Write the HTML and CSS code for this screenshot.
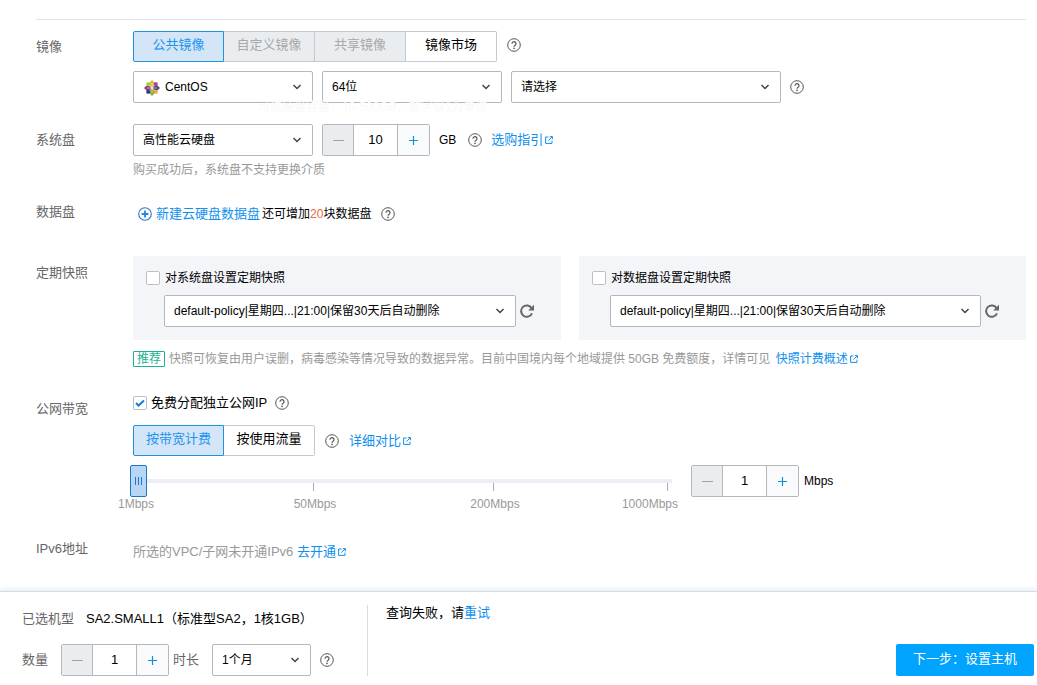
FILE: index.html
```html
<!DOCTYPE html>
<html lang="zh-CN">
<head>
<meta charset="utf-8">
<meta name="viewport" content="width=device-width, initial-scale=1">
<title>选择机型</title>
<link rel="stylesheet" href="styles.css">
</head>
<body>
<svg class="sprite" aria-hidden="true">
  <symbol id="help" viewBox="0 0 14 14"><circle cx="7" cy="7" r="6.3" fill="none" stroke="currentColor" stroke-width="1"/><path d="M5 5.7a2 2 0 1 1 3.1 1.6c-.8.5-1.1.8-1.1 1.5" fill="none" stroke="currentColor" stroke-width="1.2"/><circle cx="7" cy="10.4" r=".8" fill="currentColor"/></symbol>
  <symbol id="chevron" viewBox="0 0 10 6"><path d="M1.5 1L5 4.5 8.5 1" fill="none" stroke="currentColor" stroke-width="1.5"/></symbol>
  <symbol id="external" viewBox="0 0 8 8"><path d="M3.5 1H.6v6.4H7V4.6M4.8.6h2.6v2.6M7.2.8L3.4 4.6" fill="none" stroke="currentColor" stroke-width="1"/></symbol>
  <symbol id="refresh" viewBox="0 0 14 14"><path d="M12 9.4a5.7 5.7 0 1 1-.3-5.2" fill="none" stroke="currentColor" stroke-width="2"/><path d="M14 .8v5.8H8.2z" fill="currentColor"/></symbol>
  <symbol id="minus" viewBox="0 0 11 11"><path d="M0 5.5h11" stroke="currentColor"/></symbol>
  <symbol id="plus" viewBox="0 0 11 11"><path d="M1 5.5h9M5.5 1v9" stroke="currentColor" stroke-width="1.2"/></symbol>
</svg>

<main class="config">
  <section class="row">
    <div class="row-label">镜像</div>
    <div class="row-body">
      <div class="line tabs-line">
        <div class="tabs">
          <button class="tab active" type="button">公共镜像</button>
          <button class="tab" type="button" disabled>自定义镜像</button>
          <button class="tab" type="button" disabled>共享镜像</button>
          <button class="tab" type="button">镜像市场</button>
        </div>
        <svg class="help"><use href="#help"/></svg>
      </div>
      <div class="line selects">
        <div class="select wide with-logo">
          <svg class="os-logo" viewBox="0 0 16 16">
            <path d="M2.4 2.4h5.2v5.2H2.4z" fill="#a3cf3c"/><path d="M8.4 2.4h5.2v5.2H8.4z" fill="#a0408f"/>
            <path d="M2.4 8.4h5.2v5.2H2.4z" fill="#2b3775"/><path d="M8.4 8.4h5.2v5.2H8.4z" fill="#f0a52e"/>
            <path d="M8 0l2 2v3.4L8 7.4l-2-2V2z" fill="#e8b53c"/><path d="M16 8l-2 2h-3.4l-2-2 2-2H14z" fill="#5b4689"/>
            <path d="M8 16l-2-2v-3.4l2-2 2 2V14z" fill="#86ad45"/><path d="M0 8l2-2h3.4l2 2-2 2H2z" fill="#993f85"/>
            <path d="M8 3v10M3 8h10" stroke="#fff" stroke-width=".5"/><path d="M5 5l6 6M11 5l-6 6" stroke="#fff" stroke-width=".5"/>
          </svg>
          <select aria-label="操作系统"><option>CentOS</option></select>
          <svg class="chevron"><use href="#chevron"/></svg>
        </div>
        <div class="select wide">
          <select aria-label="系统位数"><option>64位</option></select>
          <svg class="chevron"><use href="#chevron"/></svg>
        </div>
        <div class="select widest">
          <select aria-label="镜像版本"><option>请选择</option></select>
          <svg class="chevron"><use href="#chevron"/></svg>
        </div>
        <svg class="help"><use href="#help"/></svg>
      </div>
    </div>
  </section>

  <section class="row disk">
    <div class="row-label">系统盘</div>
    <div class="row-body">
      <div class="fading-tip">可选硬盘容量：10-500GB，数字以1为单位</div>
      <div class="line selects">
        <div class="select wide">
          <select aria-label="系统盘类型"><option>高性能云硬盘</option></select>
          <svg class="chevron"><use href="#chevron"/></svg>
        </div>
        <div class="stepper">
          <button type="button" aria-label="减少" disabled><svg><use href="#minus"/></svg></button>
          <input type="text" value="10" aria-label="系统盘容量">
          <button type="button" aria-label="增加"><svg><use href="#plus"/></svg></button>
        </div>
        <span class="unit">GB</span>
        <svg class="help disk-help"><use href="#help"/></svg>
        <a class="link" href="#guide">选购指引<svg class="ext"><use href="#external"/></svg></a>
      </div>
      <p class="hint">购买成功后，系统盘不支持更换介质</p>
    </div>
  </section>

  <section class="row data">
    <div class="row-label">数据盘</div>
    <div class="row-body line data-line">
      <a class="link add" href="#add-disk"><svg class="add-icon" viewBox="0 0 14 14"><circle cx="7" cy="7" r="6.3" fill="none" stroke="#3672c9" stroke-width="1.1"/><path d="M7 3.6v6.8M3.6 7h6.8" stroke="#2588dc" stroke-width="1.8"/></svg>新建云硬盘数据盘</a>
      <span class="remain">还可增加<b>20</b>块数据盘</span>
      <svg class="help"><use href="#help"/></svg>
    </div>
  </section>

  <section class="row snapshot">
    <div class="row-label">定期快照</div>
    <div class="row-body">
      <div class="panels">
        <div class="panel">
          <label class="check small"><input type="checkbox"><span>对系统盘设置定期快照</span></label>
          <div class="line policy">
            <div class="select">
              <select aria-label="系统盘快照策略"><option>default-policy|星期四...|21:00|保留30天后自动删除</option></select>
              <svg class="chevron"><use href="#chevron"/></svg>
            </div>
            <button class="refresh" type="button" aria-label="刷新"><svg><use href="#refresh"/></svg></button>
          </div>
        </div>
        <div class="panel">
          <label class="check small"><input type="checkbox"><span>对数据盘设置定期快照</span></label>
          <div class="line policy">
            <div class="select">
              <select aria-label="数据盘快照策略"><option>default-policy|星期四...|21:00|保留30天后自动删除</option></select>
              <svg class="chevron"><use href="#chevron"/></svg>
            </div>
            <button class="refresh" type="button" aria-label="刷新"><svg><use href="#refresh"/></svg></button>
          </div>
        </div>
      </div>
      <p class="tip"><span class="badge">推荐</span>快照可恢复由用户误删，病毒感染等情况导致的数据异常。目前中国境内每个地域提供 50GB 免费额度，详情可见 <a class="link" href="#billing">快照计费概述<svg class="ext"><use href="#external"/></svg></a></p>
    </div>
  </section>

  <section class="row bandwidth">
    <div class="row-label">公网带宽</div>
    <div class="row-body">
      <div class="line ip-line">
        <label class="check"><input type="checkbox" checked><span>免费分配独立公网IP</span></label>
        <svg class="help"><use href="#help"/></svg>
      </div>
      <div class="line billing">
        <div class="tabs">
          <button class="tab active" type="button">按带宽计费</button>
          <button class="tab" type="button">按使用流量</button>
        </div>
        <svg class="help"><use href="#help"/></svg>
        <a class="link" href="#compare">详细对比<svg class="ext"><use href="#external"/></svg></a>
      </div>
      <div class="speed">
        <div class="slider">
          <input type="range" min="1" max="1000" value="1" aria-label="带宽">
          <div class="ticks"><i></i><i></i><i></i></div>
          <div class="scale"><span>1Mbps</span><span>50Mbps</span><span>200Mbps</span><span>1000Mbps</span></div>
        </div>
        <div class="stepper">
          <button type="button" aria-label="减少" disabled><svg><use href="#minus"/></svg></button>
          <input type="text" value="1" aria-label="带宽数值">
          <button type="button" aria-label="增加"><svg><use href="#plus"/></svg></button>
        </div>
        <span class="unit speed-unit">Mbps</span>
      </div>
    </div>
  </section>

  <section class="row ipv6">
    <div class="row-label">IPv6地址</div>
    <div class="row-body muted">所选的VPC/子网未开通IPv6 <a class="link" href="#enable">去开通<svg class="ext"><use href="#external"/></svg></a></div>
  </section>
</main>

<footer class="bar">
  <div class="summary">
    <div class="line"><span class="key">已选机型</span><span class="model">SA2.SMALL1（标准型SA2，1核1GB）</span></div>
    <div class="line order">
      <label class="key" for="count">数量</label>
      <div class="stepper">
        <button type="button" aria-label="减少" disabled><svg><use href="#minus"/></svg></button>
        <input id="count" type="text" value="1">
        <button type="button" aria-label="增加"><svg><use href="#plus"/></svg></button>
      </div>
      <label class="key term" for="months">时长</label>
      <div class="select months">
        <select id="months"><option>1个月</option></select>
        <svg class="chevron"><use href="#chevron"/></svg>
      </div>
      <svg class="help"><use href="#help"/></svg>
    </div>
  </div>
  <div class="result">查询失败，请<a class="link" href="#retry">重试</a></div>
  <button class="next" type="button">下一步：设置主机</button>
</footer>
</body>
</html>
```

FILE: styles.css
```css
* { box-sizing: border-box; }

body {
  margin: 0;
  min-height: 100vh;
  display: flex;
  flex-direction: column;
  background: #fff;
  color: #000;
  font-family: "Liberation Sans", "Noto Sans CJK SC", sans-serif;
  font-size: 13px;
  line-height: 20px;
}

button, input, select { font: inherit; color: inherit; margin: 0; }
p { margin: 0; }
svg { display: block; flex: none; }
.sprite { position: absolute; width: 0; height: 0; }

.config { margin: 19px 11px 0 36px; border-top: 1px solid #e3e3e6; padding-top: 11px; }

.row { display: flex; }
.row-label { flex: 0 0 97px; padding-top: 6px; color: #666; }
.row-body { flex: 1; min-width: 0; position: relative; }
.line { display: flex; align-items: center; }
.disk { margin-top: 21px; }
.data { margin-top: 20px; }
.data .row-label { padding-top: 2px; }
.snapshot { margin-top: 28px; }
.snapshot .row-label { padding-top: 7px; }
.bandwidth { margin-top: 24px; }
.ipv6 { margin-top: 24px; }
.ipv6 .row-label { padding-top: 1px; }
.ipv6 .row-body { padding-top: 4px; }
.muted { color: #999; }

.link { color: #0f90ee; text-decoration: none; }
.ext { display: inline-block; width: 8px; height: 8px; margin-left: 2px; }
.help { width: 14px; height: 14px; color: #555; }

.tabs { display: flex; }
.tab {
  width: 91px;
  height: 31px;
  padding: 0 0 4px;
  border: 1px solid #c5c9ce;
  border-left-width: 0;
  background: #fff;
}
.tab:last-child { border-radius: 0 2px 2px 0; }
.tab:disabled { background: #e9edf0; color: #a8a8a8; }
.tab.active { border: 1px solid #1b95e0; border-radius: 2px 0 0 2px; background: #d5e5f8; color: #1b95f0; }
.tabs-line { gap: 10px; }
.tabs-line .help { margin-bottom: 3px; }

.selects { gap: 9px; }
.line + .selects { margin-top: 9px; }

.select { position: relative; height: 32px; font-size: 12px; }
.select select {
  width: 100%;
  height: 100%;
  padding: 0 24px 0 9px;
  border: 1px solid #b4b8bd;
  border-radius: 2px;
  background: #fff;
  appearance: none;
}
.select.wide { width: 180px; }
.select.widest { width: 270px; }
.select.with-logo select { padding-left: 31px; }
.os-logo { position: absolute; left: 11px; top: 9px; width: 16px; height: 16px; }
.chevron { position: absolute; right: 11px; top: 13px; width: 10px; height: 6px; color: #444; pointer-events: none; }

.stepper {
  display: flex;
  width: 108px;
  height: 32px;
  border: 1px solid #b4b8bd;
  border-radius: 2px;
}
.stepper button {
  width: 31px;
  padding: 0;
  display: grid;
  place-items: center;
  border: 0;
  background: #f8fafc;
  color: #178fd6;
}
.stepper button:disabled { width: 30px; background: #e9edf0; color: #a0a4a8; }
.stepper svg { width: 11px; height: 11px; }
.stepper input {
  flex: 1;
  min-width: 0;
  padding: 0;
  border: 1px solid #b4b8bd;
  border-width: 0 1px;
  text-align: center;
}

.unit { font-size: 12px; }
.selects .disk-help { margin-left: 3px; }
.fading-tip { position: absolute; left: 125px; top: -27px; font-size: 12px; color: #f9f9f9; }
.hint { margin-top: 4px; font-size: 12px; color: #999; }

.data-line { height: 28px; padding-left: 5px; }
.add { display: flex; align-items: center; gap: 4px; }
.add-icon { width: 14px; height: 14px; }
.remain { margin: 0 10px 0 2px; font-size: 12px; }
.remain b { font-weight: normal; color: #e8693a; }

.panels { display: grid; grid-template-columns: 428fr 447fr; gap: 18px; }
.panel { padding: 12px 27px 13px 13px; background: #f4f5f9; }
.check { display: flex; align-items: center; gap: 4px; }
.check.small { font-size: 12px; gap: 5px; }
.check input {
  width: 14px;
  height: 14px;
  border: 1px solid #bcc0c4;
  border-radius: 2px;
  background: #fff;
  appearance: none;
}
.check input:checked {
  background: #fff url("data:image/svg+xml,%3Csvg xmlns='http://www.w3.org/2000/svg' viewBox='0 0 12 12'%3E%3Cpath d='M2 6l2.5 2.5L10 3.5' fill='none' stroke='%231b7fd0' stroke-width='2'/%3E%3C/svg%3E");
}
.policy { margin: 7px 0 0 18px; gap: 4px; }
.policy .select { flex: 1; min-width: 0; }
.refresh { width: 14px; height: 14px; padding: 0; border: 0; background: none; color: #666; }
.refresh svg { width: 14px; height: 14px; }

.tip { margin-top: 9px; font-size: 12px; color: #999; }
.tip .link { margin-left: 2px; }
.badge {
  display: inline-block;
  margin-right: 4px;
  padding: 0 3px;
  border: 1px solid #1bb394;
  border-radius: 1px;
  line-height: 14px;
  color: #1bb394;
}

.ip-line { gap: 8px; }
.billing { margin-top: 12px; gap: 10px; }
.speed { display: flex; align-items: flex-start; margin-top: 9px; }
.slider { flex: 0 1 542px; min-width: 240px; margin: 0 19px 0 -3px; }
.slider input {
  display: block;
  width: 100%;
  height: 32px;
  background: linear-gradient(#ecedf5, #ecedf5) center / 100% 4px no-repeat;
  appearance: none;
}
.slider input::-webkit-slider-thumb {
  width: 17px;
  height: 32px;
  border: 1px solid #2474c4;
  border-radius: 2px;
  background: repeating-linear-gradient(90deg, #2474c4 0 1px, transparent 1px 3px) 4px center / 7px 8px no-repeat, #b7d6f5;
  appearance: none;
}
.ticks {
  display: grid;
  grid-template-columns: 184fr 180fr 174fr 4fr;
  height: 8px;
  margin-top: -14px;
  pointer-events: none;
}
.ticks i { border-right: 1px solid #a8abb2; }
.scale {
  display: grid;
  grid-template-columns: 176fr 177fr 152fr 55fr;
  margin: 3px -6px 0 -12px;
  font-size: 12px;
  color: #999;
}
.speed-unit { margin-left: 5px; line-height: 32px; }

.bar {
  display: flex;
  margin-top: auto;
  padding: 13px 3px 9px 22px;
  border-top: 1px solid #d3dce6;
  box-shadow: 0 -2px 5px #e4edf5;
}
.summary { padding: 4px 33px 0 0; border-right: 1px solid #d8dadd; }
.key { color: #666; }
.model { margin-left: 12px; }
.order { margin-top: 15px; }
.order .stepper { margin-left: 13px; }
.term { margin: 0 13px 0 4px; }
.months { width: 99px; margin-right: 9px; }
.result { flex: 1; margin-top: -2px; padding-left: 18px; }
.next {
  align-self: flex-end;
  width: 138px;
  height: 32px;
  padding: 0 0 3px;
  border: 0;
  border-radius: 2px;
  background: #00a4ff;
  color: #fff;
}
```
